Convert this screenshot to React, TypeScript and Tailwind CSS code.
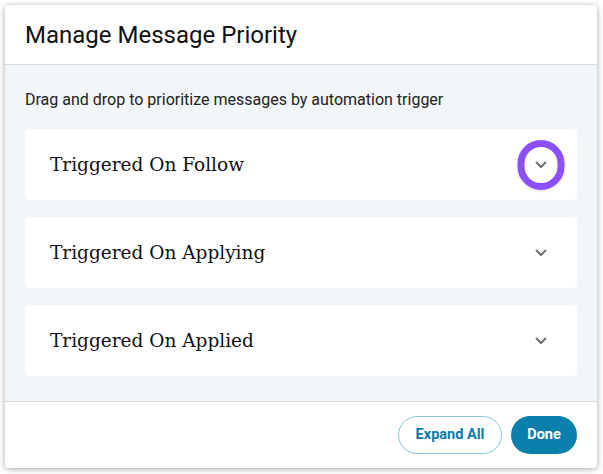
const triggers = ["Triggered On Follow", "Triggered On Applying", "Triggered On Applied"];

function Chevron() {
  return (
    <svg width="12" height="8" viewBox="0 0 12 8" fill="none">
      <path d="M1.5 1.5 6 6l4.5-4.5" stroke="#6b6b6b" strokeWidth="1.8" strokeLinecap="round" strokeLinejoin="round" />
    </svg>
  );
}

export default function App() {
  return (
    <div className="h-[474px] w-[603px] bg-white p-[5px] font-['Roboto',sans-serif]">
      <div className="flex h-[463px] w-[592px] flex-col overflow-hidden rounded-[4px] bg-white shadow-[0_1px_6px_rgba(0,0,0,0.35)]">
        {/* Header */}
        <div className="flex h-[60px] shrink-0 items-center border-b border-[#d6dbe0] px-5">
          <h1 className="text-[24px] leading-none text-[#111]">Manage Message Priority</h1>
        </div>

        {/* Body */}
        <div className="flex h-[336px] flex-col bg-[#f3f6f9] px-5 pt-[25px]">
          <p className="text-[16px] leading-5 text-[#222]">
            Drag and drop to prioritize messages by automation trigger
          </p>
          <div className="mt-[19px] flex flex-col gap-[17px]">
            {triggers.map((t, i) => (
              <div key={t} className="flex h-[71px] items-center justify-between rounded-[5px] bg-white pl-[25px] pr-[28px]">
                <span className="font-['DejaVu_Serif',serif] text-[18.5px] text-[#111]">{t}</span>
                <div className="relative flex h-4 w-4 items-center justify-center">
                  {i === 0 && (
                    <div className="absolute left-1/2 top-1/2 h-[50px] w-[47px] -translate-x-1/2 -translate-y-1/2 rounded-full border-[7px] border-[#8b50fb] shadow-[0_1px_3px_rgba(0,0,0,0.15)]" />
                  )}
                  <Chevron />
                </div>
              </div>
            ))}
          </div>
        </div>

        {/* Footer */}
        <div className="flex flex-1 items-center justify-end gap-[9px] border-t border-[#d6dbe0] pr-5">
          <button className="h-[38px] w-[104px] rounded-full border border-[#8cc4da] text-[14.5px] font-bold text-[#0b7ca8]">
            Expand All
          </button>
          <button className="h-[38px] w-[66px] rounded-full bg-[#0b7fab] text-[14.5px] font-bold text-white">
            Done
          </button>
        </div>
      </div>
    </div>
  );
}
